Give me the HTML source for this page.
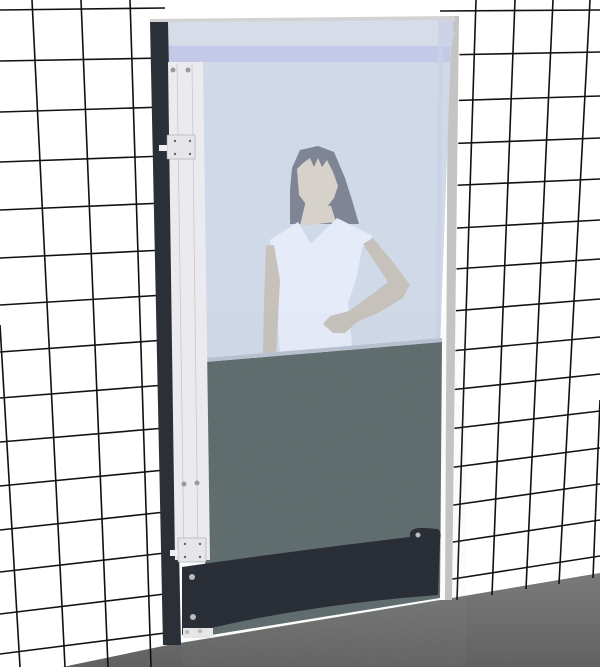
<!DOCTYPE html>
<html><head><meta charset="utf-8"><style>
html,body{margin:0;padding:0;background:#fff;}
svg{display:block;}
</style></head><body>
<svg width="600" height="667" viewBox="0 0 600 667" xmlns="http://www.w3.org/2000/svg">
<defs>
<linearGradient id="fl" x1="0" y1="0" x2="0" y2="1"><stop offset="0" stop-color="#7a7a7a"/><stop offset="1" stop-color="#5e5e5e"/></linearGradient>
<filter id="noise"><feTurbulence baseFrequency="0.9" numOctaves="1" seed="3"/><feColorMatrix values="0 0 0 0 0.36  0 0 0 0 0.42  0 0 0 0 0.42  0 0 0 0.25 0"/></filter>
</defs>
<rect width="600" height="667" fill="#fff"/>
<!-- floor -->
<polygon points="0,680 168,645 440,600 600,573 600,667 0,667" fill="url(#fl)"/>
<!-- left wall grid -->
<g stroke="#111" stroke-width="1.6" fill="none">
<line x1="32" y1="0" x2="65" y2="667"/>
<line x1="81" y1="0" x2="108" y2="667"/>
<line x1="130" y1="0" x2="151" y2="667"/>
<line x1="0" y1="325" x2="20" y2="667"/>
<line x1="0" y1="10" x2="165" y2="8"/>
<line x1="0" y1="61" x2="165" y2="58"/>
<line x1="0" y1="112" x2="165" y2="107"/>
<line x1="0" y1="162" x2="165" y2="156"/>
<line x1="0" y1="210" x2="165" y2="203"/>
<line x1="0" y1="258" x2="165" y2="250"/>
<line x1="0" y1="305" x2="165" y2="295"/>
<line x1="0" y1="352" x2="165" y2="340"/>
<line x1="0" y1="398" x2="165" y2="385"/>
<line x1="0" y1="442" x2="165" y2="428"/>
<line x1="0" y1="486" x2="165" y2="470"/>
<line x1="0" y1="530" x2="165" y2="512"/>
<line x1="0" y1="572" x2="165" y2="553"/>
<line x1="0" y1="614" x2="165" y2="594"/>
<line x1="0" y1="654" x2="165" y2="633"/>
</g>
<!-- right wall grid -->
<g stroke="#111" stroke-width="1.6" fill="none">
<line x1="476" y1="0" x2="457" y2="600"/>
<line x1="515" y1="0" x2="492" y2="595"/>
<line x1="553" y1="0" x2="526" y2="589"/>
<line x1="590" y1="0" x2="559" y2="584"/>
<line x1="600" y1="400" x2="593" y2="578"/>
<line x1="440" y1="11" x2="600" y2="10"/>
<line x1="440" y1="55" x2="600" y2="52"/>
<line x1="440" y1="101" x2="600" y2="96"/>
<line x1="440" y1="144" x2="600" y2="138"/>
<line x1="440" y1="186" x2="600" y2="179"/>
<line x1="440" y1="229" x2="600" y2="220"/>
<line x1="440" y1="270" x2="600" y2="259"/>
<line x1="440" y1="312" x2="600" y2="299"/>
<line x1="440" y1="352" x2="600" y2="337"/>
<line x1="440" y1="391" x2="600" y2="374"/>
<line x1="440" y1="430" x2="600" y2="411"/>
<line x1="440" y1="469" x2="600" y2="448"/>
<line x1="440" y1="507" x2="600" y2="484"/>
<line x1="440" y1="544" x2="600" y2="520"/>
<line x1="440" y1="581" x2="600" y2="556"/>
</g>
<!-- jamb -->
<polygon points="440,16 460,16 452,600 440,600" fill="#fff"/>
<polygon points="448,16 459,16 452,600 445,600" fill="#c4c4c4"/>
<!-- door top bar -->
<polygon points="150,19 455,16 455,22 150,24" fill="#d2d2d2"/>
<!-- glass -->
<polygon points="168,22 452,20 440,350 168,360" fill="#d0d9e8"/>
<polygon points="168,22 452,20 452,45 168,45" fill="#d6dde8"/>
<polygon points="168,46 450,46 450,62 168,62" fill="#c3c9e6"/>
<polygon points="438,20 452,20 455,34 451,45 443,45 440,350 436,350" fill="#c9d1e6" opacity=".8"/>
<!-- person -->
<polygon points="292,168 300,150 318,146 334,152 345,178 352,200 359,224 290,224 290,190" fill="#7f8595"/>
<polygon points="297,169 303,163 310,158 314,167 318,158 322,167 327,160 333,172 338,186 334,198 327,207 318,213 308,207 299,195" fill="#d6d1cb"/>
<polygon points="305,204 331,206 336,222 300,226" fill="#d6d1cb"/>
<polygon points="270,240 298,222 311,244 337,218 373,236 362,248 357,276 348,303 352,345 357,352 280,354 276,305 272,260" fill="#e6ebfa"/>
<polygon points="266,246 274,245 280,280 278,320 276,356 263,357 264,300" fill="#c6c1bb"/>
<polygon points="363,244 373,238 393,262 410,285 403,298 380,312 357,322 345,333 333,333 323,324 330,316 349,311 378,290 388,282" fill="#c6c1bb"/>
<!-- lower panel -->
<polygon points="205,362 442,342 440,598 205,636" fill="#5d6a6b"/>
<polygon points="205,362 442,342 440,598 205,636" filter="url(#noise)"/>
<polygon points="205,358 442,338 442,342 205,362" fill="#b8c0d0"/>
<!-- left dark strip -->
<polygon points="150,22 168,22 181,645 163,645" fill="#2b3038"/>
<!-- white rail -->
<polygon points="168,62 203,62 210,560 175,560" fill="#ebebef"/>
<line x1="177" y1="64" x2="184" y2="558" stroke="#c8c8cc" stroke-width=".8"/>
<line x1="192" y1="64" x2="198" y2="558" stroke="#c8c8cc" stroke-width=".8"/>
<g fill="#9a9a9e"><circle cx="173" cy="70" r="2.5"/><circle cx="188" cy="70" r="2.5"/><circle cx="184" cy="484" r="2.5"/><circle cx="197" cy="483" r="2.5"/></g>
<!-- hinges -->
<rect x="167" y="135" width="28" height="24" fill="#e6e6ea" stroke="#999" stroke-width=".5"/>
<rect x="159" y="145" width="8" height="6" fill="#eee"/>
<rect x="178" y="538" width="28" height="24" fill="#e6e6ea" stroke="#999" stroke-width=".5"/>
<rect x="170" y="550" width="8" height="6" fill="#eee"/>
<g fill="#666"><circle cx="175" cy="141" r="1.2"/><circle cx="190" cy="141" r="1.2"/><circle cx="175" cy="154" r="1.2"/><circle cx="190" cy="154" r="1.2"/>
<circle cx="185" cy="544" r="1.2"/><circle cx="200" cy="544" r="1.2"/><circle cx="185" cy="557" r="1.2"/><circle cx="200" cy="557" r="1.2"/></g>
<!-- kick plate -->
<path d="M410,533 Q412,527 425,528 L438,529 Q442,532 440,540 L438,595 Q300,605 182,635 L182,567 Q300,550 410,537 Z" fill="#2a2e36"/>
<rect x="183" y="628" width="30" height="10" fill="#e6e6e6"/>
<g fill="#bbb"><circle cx="192" cy="577" r="3"/><circle cx="193" cy="617" r="3"/><circle cx="187" cy="632" r="2.2"/><circle cx="200" cy="631" r="2.2"/><circle cx="418" cy="535" r="2.5"/></g>
</svg>
</body></html>
